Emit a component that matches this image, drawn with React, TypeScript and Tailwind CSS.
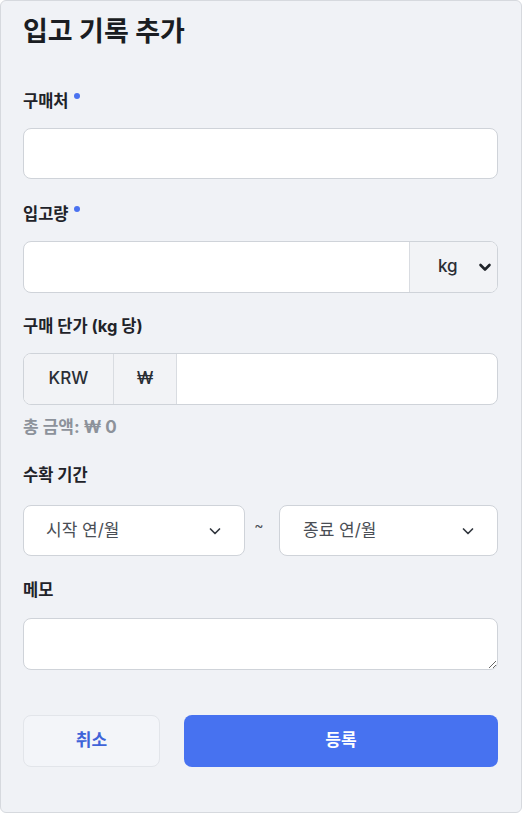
import React from "react";

const font = { fontFamily: 'Inter, "Noto Sans CJK KR", "Noto Sans", sans-serif' };

function Label({ children, required }: { children: React.ReactNode; required?: boolean }) {
  return (
    <div className="flex items-start h-[20px] text-[16.5px] leading-[20px] font-bold text-[#1f2329]">
      <span>{children}</span>
      {required && <span className="ml-[5px] mt-[2px] w-[6px] h-[6px] rounded-full bg-[#4a72f0]" />}
    </div>
  );
}

function Chevron({ bold }: { bold?: boolean }) {
  return (
    <svg width="14" height="14" viewBox="0 0 14 14" fill="none">
      <path d="M2.5 5 L7 9.5 L11.5 5" stroke={bold ? "#1f2329" : "#333840"} strokeWidth={bold ? 2.6 : 1.7} strokeLinecap="round" strokeLinejoin="round" />
    </svg>
  );
}

export default function App() {
  return (
    <div style={font} className="w-[522px] h-[813px] bg-[#f0f2f6] border border-[#d6d9de] rounded-[6px] box-border pl-[22px] pr-[23px] pt-[14px]">
      <h1 className="text-[27px] leading-[34px] font-bold text-[#1a1d22]">입고 기록 추가</h1>

      <div className="mt-[42px]">
        <Label required>구매처</Label>
        <div className="mt-[17px] h-[51px] bg-white border border-[#cfd3d9] rounded-[8px]" />
      </div>

      <div className="mt-[25px]">
        <Label required>입고량</Label>
        <div className="mt-[17px] h-[52px] bg-white border border-[#cfd3d9] rounded-[8px] flex overflow-hidden">
          <div className="flex-1" />
          <div className="w-[88px] bg-[#f2f3f6] border-l border-[#d9dce1] flex items-center pl-[28px] gap-[20px]">
            <span className="text-[17px] font-medium text-[#2a2e35]">kg</span>
            <Chevron bold />
          </div>
        </div>
      </div>

      <div className="mt-[23px]">
        <Label>구매 단가 (kg 당)</Label>
        <div className="mt-[17px] h-[52px] bg-white border border-[#cfd3d9] rounded-[8px] flex overflow-hidden">
          <div className="w-[90px] bg-[#f2f3f6] border-r border-[#d9dce1] flex items-center justify-center text-[17px] font-medium text-[#2a2e35]">KRW</div>
          <div className="w-[63px] bg-[#f2f3f6] border-r border-[#d9dce1] flex items-center justify-center text-[17px] font-medium text-[#2a2e35]">₩</div>
          <div className="flex-1" />
        </div>
        <div className="mt-[12px] text-[17px] leading-[20px] font-bold text-[#8d929b]">총 금액: ₩ 0</div>
      </div>

      <div className="mt-[28px]">
        <Label>수확 기간</Label>
        <div className="mt-[20px] flex items-center">
          <div className="w-[222px] h-[51px] bg-white border border-[#cfd3d9] rounded-[8px] flex items-center justify-between pl-[22px] pr-[22px]">
            <span className="text-[17px] text-[#4a4e55]">시작 연/월</span>
            <Chevron />
          </div>
          <div className="w-[34px] text-center text-[14px] text-[#4a4e55] -mt-[12px] -ml-[3px] mr-[3px]">~</div>
          <div className="flex-1 h-[51px] bg-white border border-[#cfd3d9] rounded-[8px] flex items-center justify-between pl-[23px] pr-[22px]">
            <span className="text-[17px] text-[#4a4e55]">종료 연/월</span>
            <Chevron />
          </div>
        </div>
      </div>

      <div className="mt-[24px]">
        <Label>메모</Label>
        <textarea className="mt-[18px] block w-full h-[52px] bg-white border border-[#cfd3d9] rounded-[8px] resize-y outline-none" />
      </div>

      <div className="mt-[45px] flex gap-[24px]">
        <button className="w-[137px] h-[52px] rounded-[8px] bg-[#f3f5f9] border border-[#e2e5ea] text-[17px] font-bold text-[#3f63d8]">취소</button>
        <button className="flex-1 h-[52px] rounded-[8px] bg-[#4772f0] text-[17px] font-bold text-white">등록</button>
      </div>
    </div>
  );
}
